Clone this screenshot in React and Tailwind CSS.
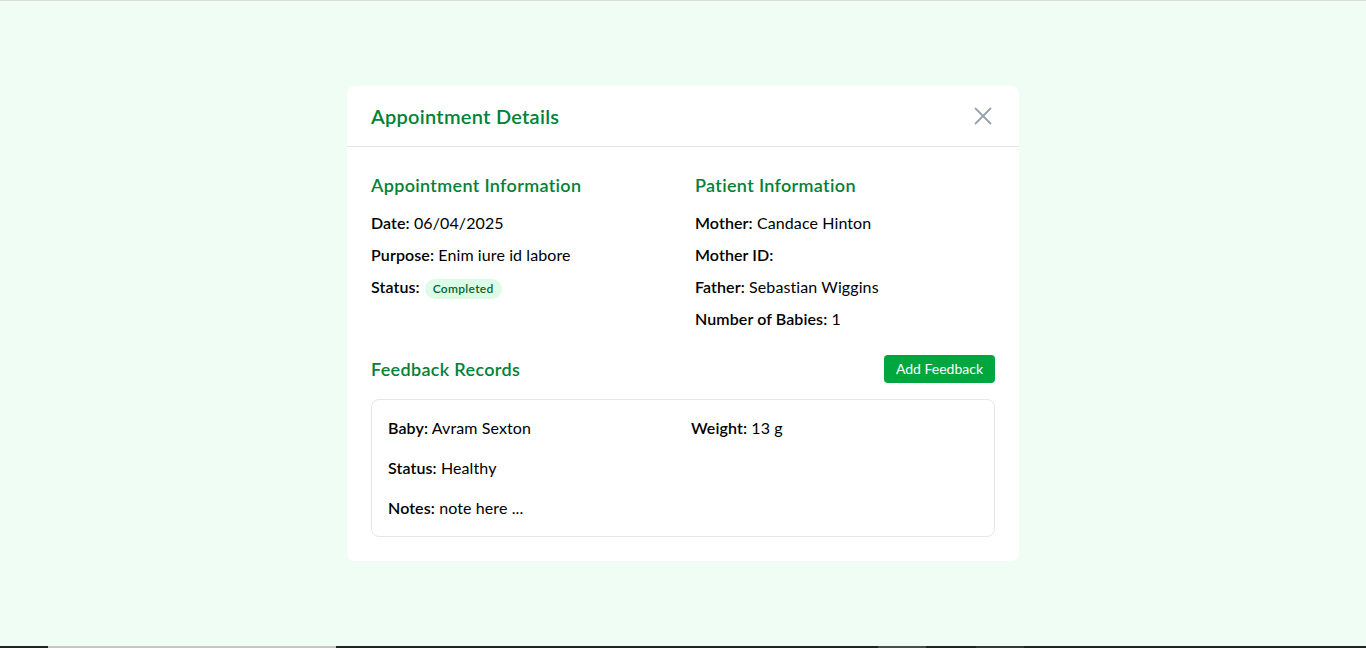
import React from "react";

function Field({ label, value, children }) {
  return (
    <p className="text-base leading-6 text-black tracking-[0.1px]">
      <span className="font-semibold">{label}</span>
      {value !== undefined ? <span> {value}</span> : null}
      {children}
    </p>
  );
}

export default function App() {
  return (
    <div
      className="h-screen flex flex-col bg-[#f0fdf4] border-t border-[#dcdcdc]"
      style={{ fontFamily: "Lato, 'Noto Sans', sans-serif" }}
    >
      <div className="flex-1 flex items-center justify-center">
        <div className="w-[672px] bg-white rounded-lg">
          <div className="flex items-center justify-between px-6 h-[61px] border-b border-gray-200">
            <h2 className="text-xl font-semibold text-[#008236] tracking-[0.27px]">Appointment Details</h2>
            <button className="text-gray-400 w-6 h-6 flex items-center justify-center">
              <svg width="24" height="24" viewBox="0 0 24 24" fill="none" stroke="currentColor" strokeWidth="1.8" strokeLinecap="round">
                <path d="M4.5 4.5L19.5 19.5M19.5 4.5L4.5 19.5" />
              </svg>
            </button>
          </div>
          <div className="p-6">
            <div className="grid grid-cols-2 gap-6">
              <div>
                <h3 className="text-lg font-semibold text-[#008236] mb-3 tracking-[0.33px]">Appointment Information</h3>
                <div className="space-y-2">
                  <Field label="Date:" value="06/04/2025" />
                  <Field label="Purpose:" value="Enim iure id labore" />
                  <Field label="Status:">
                    <span className="ml-[5px] inline-block align-middle rounded-full bg-[#dcfce7] text-[#016630] text-xs font-semibold px-2 leading-5 relative tracking-[0.3px]">
                      Completed
                    </span>
                  </Field>
                </div>
              </div>
              <div>
                <h3 className="text-lg font-semibold text-[#008236] mb-3 tracking-[0.33px]">Patient Information</h3>
                <div className="space-y-2">
                  <Field label="Mother:" value="Candace Hinton" />
                  <Field label="Mother ID:" />
                  <Field label="Father:" value="Sebastian Wiggins" />
                  <Field label="Number of Babies:" value="1" />
                </div>
              </div>
            </div>
            <div className="mt-6">
              <div className="flex items-center justify-between mb-4">
                <h3 className="text-lg font-semibold text-[#008236] tracking-[0.33px]">Feedback Records</h3>
                <button className="bg-[#00a63e] text-white text-sm px-3 h-7 rounded">Add Feedback</button>
              </div>
              <div className="border border-gray-200 rounded-lg p-4">
                <div className="grid grid-cols-2 gap-4">
                  <Field label="Baby:" value="Avram Sexton" />
                  <Field label="Weight:" value="13 g" />
                  <div className="col-span-2">
                    <Field label="Status:" value="Healthy" />
                  </div>
                  <div className="col-span-2">
                    <Field label="Notes:" value="note here ..." />
                  </div>
                </div>
              </div>
            </div>
          </div>
        </div>
      </div>
      <div className="h-[2px] flex">
        <div className="w-[48px] bg-[#202522]" />
        <div className="w-[288px] bg-[#c4c4c4]" />
        <div className="w-[542px] bg-[#202522]" />
        <div className="w-[48px] bg-[#4a4f4c]" />
        <div className="w-[50px] bg-[#202522]" />
        <div className="w-[48px] bg-[#353a37]" />
        <div className="flex-1 bg-[#202522]" />
      </div>
    </div>
  );
}
